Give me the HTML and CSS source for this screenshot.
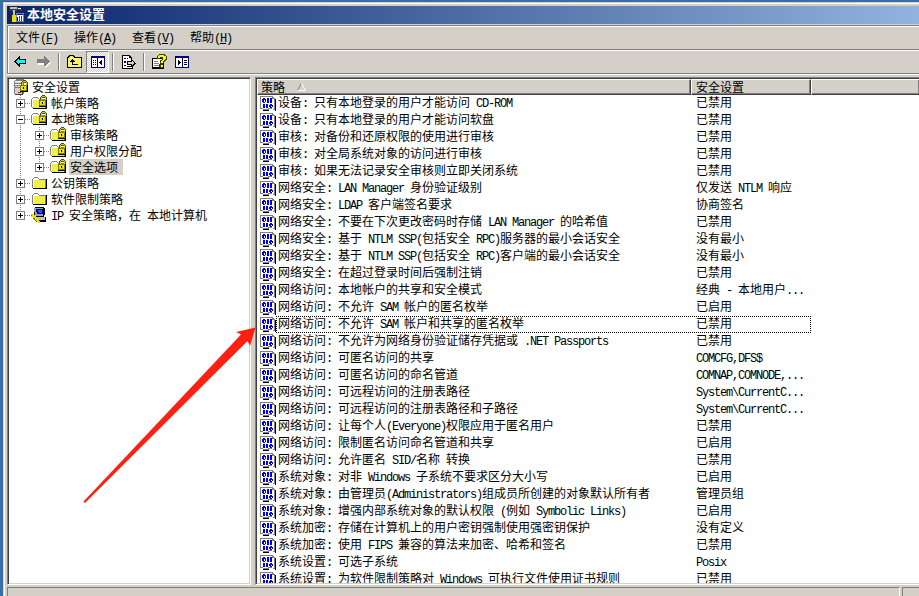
FILE: index.html
```
<!DOCTYPE html>
<html lang="zh-CN">
<head>
    <meta charset="UTF-8">
    <title>本地安全设置</title>
    <link rel="stylesheet" href="styles.css">
</head>
<body>
    <svg class="sprites" shape-rendering="crispEdges">
        <symbol id="lock" viewBox="0 0 8 12">
            <path d="M1 6V2h1V1h1V0h3v1h1v1h1v4H6V3H3v3z" fill="#505000"/>
            <path d="M2 5V2h1V1h3v1h1v3H6V2H3v3z" fill="#d8d020"/>
            <path d="M0 5h8v7H0z" fill="#000"/>
            <path d="M0 5h7v6H0z" fill="#808000"/>
            <path d="M1 6h5v4H1z" fill="#e8e020"/>
            <path d="M3 7h1v2H3z" fill="#000"/>
        </symbol>
        <symbol id="folder" viewBox="0 0 16 16">
            <path d="M2 14h14V4h-1v9H2z" fill="#000"/>
            <path d="M1 4h1V3h1V2h4v1h1v1h7v9H1z" fill="#808080"/>
            <path d="M2 4h1V3h4v1h1v1h6v8H2z" fill="#fff"/>
            <path d="M3 5h11v8H3z" fill="#f2ee48"/>
        </symbol>
        <symbol id="folder-lock" viewBox="0 0 16 16">
            <path d="M2 14h14V4h-1v9H1z" fill="#000"/>
            <path d="M0 4h1V3h1V2h5v1h1v1h7v9H1V12H0z" fill="#808080"/>
            <path d="M1 4h1V3h5v1h1v1h6v8H2v-1H1z" fill="#fff"/>
            <path d="M2 5h12v8H2z" fill="#f2ee48"/>
            <use href="#lock" x="8" y="0" width="8" height="12"/>
        </symbol>
        <symbol id="server" viewBox="0 0 16 16">
            <path d="M0 2l2-2h8v14l-2 2H2l-2-1z" fill="#808080"/>
            <path d="M1 2h7v13H1z" fill="#d4d0c8"/>
            <path d="M1 4h7v1H1zM1 6h7v1H1zM1 8h7v1H1z" fill="#808080"/>
            <path d="M1 2h7v1H1zM1 5h6v1H1z" fill="#fff"/>
            <path d="M4 13h3v1H4z" fill="#f00"/>
            <path d="M8 2h1v13H8zM1 15h8v1H1z" fill="#404040"/>
            <use href="#lock" x="6" y="1" width="8" height="12"/>
        </symbol>
        <symbol id="ipsec" viewBox="0 0 16 16">
            <path d="M3 1h1V0h9v1h1v7h-1v2h2v5H6v-1H4z" fill="#000"/>
            <path d="M3 1h9v8H4z" fill="#a0a0a0"/>
            <path d="M5 2h7v5H6z" fill="#000080"/>
            <path d="M7 3h4v3H8z" fill="#1060ff"/>
            <path d="M5 10h9v3H6z" fill="#c0c0c0"/>
            <path d="M0 7h3v1h2v2h1v1h1v1h1v2h1v2H7v-1H6v-1H5v-1H4v-2H2v-1H0V9h1V8H0z" fill="#e8e000"/>
            <path d="M0 8h1v1H0zM2 11h2v2h1v1h1v1H5v-1H4v-1H3v-1H2z" fill="#807000"/>
        </symbol>
        <symbol id="line" viewBox="0 0 19 16">
            <path d="M9.500 0V16" stroke="#808080" stroke-dasharray="1 1"/>
        </symbol>
        <symbol id="plus" viewBox="0 0 19 16">
            <path d="M9.500 0V16M14 8.500H19" stroke="#808080" stroke-dasharray="1 1"/>
            <rect x="5.500" y="4.500" width="8" height="8" fill="#fff" stroke="#808080"/>
            <path d="M7 8.500h5M9.500 6v5" stroke="#000"/>
        </symbol>
        <symbol id="plus-end" viewBox="0 0 19 16">
            <path d="M9.500 0V8M14 8.500H19" stroke="#808080" stroke-dasharray="1 1"/>
            <rect x="5.500" y="4.500" width="8" height="8" fill="#fff" stroke="#808080"/>
            <path d="M7 8.500h5M9.500 6v5" stroke="#000"/>
        </symbol>
        <symbol id="minus" viewBox="0 0 19 16">
            <path d="M9.500 0V16M14 8.500H19" stroke="#808080" stroke-dasharray="1 1"/>
            <rect x="5.500" y="4.500" width="8" height="8" fill="#fff" stroke="#808080"/>
            <path d="M7 8.500h5" stroke="#000"/>
        </symbol>
        <symbol id="policy" viewBox="0 0 16 16">
            <path d="M3 13h1v1h4v-1h5V3h3v12h-1v-1h-2v-1H9v2H3z" fill="#000"/>
            <path d="M0 0h13v1h1v1h1v12h-2v-1H9v1H3v-1H0z" fill="#808080"/>
            <path d="M1 1h11v2h2v10h-2v-1H8v1H3v-1H1z" fill="#fff"/>
            <path d="M3 2h2v1h1v3H5v1H3V6H2V3h1zM7 2h2v5H7zM10 2h2v5h-2zM3 8h2v4H3zM6 8h2v4H6zM10 8h2v1h1v2h-1v1h-2v-1H9V9h1z" fill="#0000e8"/>
            <path d="M3.500 3.500h1v2h-1zM10.500 9.500h1v1h-1z" fill="#fff"/>
        </symbol>
    </svg>

    <div class="window">
        <div class="title-bar">
            <svg width="16" height="16" shape-rendering="crispEdges">
                <path d="M1 0h8v1h3v1h1v2h-2V3H8v1H6v1H3V4H1z" fill="#404040"/>
                <path d="M1 0h7v2H1z" fill="#c0c0c0"/>
                <path d="M9 1h3v1H9z" fill="#fff"/>
                <path d="M3 8h4v7H3z" fill="#e8e000"/>
                <path d="M4 3h2v5H4z" fill="#c0c0c0"/>
                <path d="M7 6h8v9H7z" fill="#808080"/>
                <path d="M8 8h6v6H8z" fill="#fff"/>
                <path d="M8 7h6v1H8zM8 10h1v4H8z" fill="#0000ff"/>
                <path d="M10 9h1v5h-1zM12 9h1v5h-1z" fill="#d00060"/>
            </svg>
            <span>本地安全设置</span>
        </div>

        <div class="menu-bar">
            <span>文件<i>(<u>F</u>)</i></span>
            <span>操作<i>(<u>A</u>)</i></span>
            <span>查看<i>(<u>V</u>)</i></span>
            <span>帮助<i>(<u>H</u>)</i></span>
        </div>

        <div class="toolbar">
            <div class="tool">
                <svg width="13" height="11" shape-rendering="crispEdges">
                    <path d="M0 5h1V4h1V3h1V2h1V1h1V0h1v3h6v5H6v3H5v-1H4V9H3V8H2V7H1V6H0z" fill="#000"/>
                    <path d="M2 5h1V4h1V3h1v1h6v3H5v1H4V7H3V6H2z" fill="#00ffff"/>
                </svg>
            </div>
            <div class="tool">
                <svg width="14" height="11" shape-rendering="crispEdges">
                    <path d="M1 5h7V2h1v1h1v1h1v1h1v1h2v1h-1v1h-1v1h-1v1h-1v1H8V9H1z" fill="#fff"/>
                    <path d="M0 3h7V0h1v1h1v1h1v1h1v1h1v1h1v1h-1v1h-1v1h-1v1H9v1H7V7H0z" fill="#808080"/>
                </svg>
            </div>
            <div class="sep"></div>
            <div class="tool">
                <svg width="15" height="13" shape-rendering="crispEdges">
                    <path d="M0 2h1V1h1V0h5v1h1v1h7v11H0z" fill="#000"/>
                    <path d="M1 3h1V2h1V1h3v1h1v1h7v9H1z" fill="#f8f468"/>
                    <path d="M5 4h1v1h1v1h1v1H6v2h5v1H5V7H3V6h1V5h1z" fill="#000"/>
                </svg>
            </div>
            <div class="tool pressed">
                <svg width="14" height="12" shape-rendering="crispEdges">
                    <path d="M0 0h14v12H0z" fill="#000080"/>
                    <path d="M1 2h5v9H1zM7 2h6v9H7z" fill="#fff"/>
                    <path d="M2 4h1v1H2zM4 4h1v1H4zM2 6h1v1H2zM4 6h1v1H4zM2 8h1v1H2zM4 8h1v1H4zM10 4h1v5h-1zM9 5h1v3H9zM8 6h1v1H8z" fill="#000"/>
                </svg>
            </div>
            <div class="sep"></div>
            <div class="tool">
                <svg width="14" height="14" shape-rendering="crispEdges">
                    <path d="M0 0h8v1h1v1h1v2H9V3H7V1H1v12h9v-2h1v3H0z" fill="#000"/>
                    <path d="M1 1h6v3h3v9H1z" fill="#fff"/>
                    <path d="M2 3h2v1H2zM2 6h2v2H2zM2 10h2v1H2z" fill="#000080"/>
                    <path d="M5 3h1v1H5zM5 11h4v1H5z" fill="#000"/>
                    <path d="M5 6h4V4h1v1h1v1h1v1h1v1h1v1h-1v1h-1v1h-1v1h-2v-2H5z" fill="#000"/>
                    <path d="M6 7h4V6h1v1h1v2h-1v1h-1V9H6z" fill="#d4d0c8"/>
                </svg>
            </div>
            <div class="sep"></div>
            <div class="tool">
                <svg width="15" height="15" shape-rendering="crispEdges">
                    <path d="M0 4h12v11H0z" fill="#000"/>
                    <path d="M1 5h10v8H1z" fill="#fff"/>
                    <path d="M2 7h4v1H2zM2 9h5v1H2zM2 11h5v1H2z" fill="#808080"/>
                    <path d="M5 2h1V1h1V0h6v1h1v1h1v4h-1v1h-1v1h-1v1h-1v5H8v-1H7v-3h1V6h2V4H8v1H5z" fill="#404000"/>
                    <path d="M6 2h1V1h5v1h2v3h-1v1h-1v1h-1v2H9V7h1V6h1V3H8v1H6zM9 11h2v2H9z" fill="#ffff00"/>
                </svg>
            </div>
            <div class="tool last">
                <svg width="14" height="12" shape-rendering="crispEdges">
                    <path d="M0 0h14v12H0z" fill="#000080"/>
                    <path d="M1 2h6v9H1zM8 2h5v9H8z" fill="#fff"/>
                    <path d="M3 4h1v5H3zM4 5h1v3H4zM5 6h1v1H5zM9 4h3v1H9zM9 6h3v1H9zM9 8h3v1H9z" fill="#000"/>
                </svg>
            </div>
        </div>

        <div class="panes">
            <div class="tree">
                <div class="node root"><svg class="icon"><use href="#server"/></svg><span>安全设置</span></div>
                <div class="node"><svg class="branch"><use href="#plus"/></svg><svg class="icon"><use href="#folder-lock"/></svg><span>帐户策略</span></div>
                <div class="node"><svg class="branch"><use href="#minus"/></svg><svg class="icon"><use href="#folder-lock"/></svg><span>本地策略</span></div>
                <div class="node"><svg class="branch"><use href="#line"/></svg><svg class="branch"><use href="#plus"/></svg><svg class="icon"><use href="#folder-lock"/></svg><span>审核策略</span></div>
                <div class="node"><svg class="branch"><use href="#line"/></svg><svg class="branch"><use href="#plus"/></svg><svg class="icon"><use href="#folder-lock"/></svg><span>用户权限分配</span></div>
                <div class="node"><svg class="branch"><use href="#line"/></svg><svg class="branch"><use href="#plus-end"/></svg><svg class="icon"><use href="#folder-lock"/></svg><span class="selected">安全选项</span></div>
                <div class="node"><svg class="branch"><use href="#plus"/></svg><svg class="icon"><use href="#folder"/></svg><span>公钥策略</span></div>
                <div class="node"><svg class="branch"><use href="#plus"/></svg><svg class="icon"><use href="#folder"/></svg><span>软件限制策略</span></div>
                <div class="node"><svg class="branch"><use href="#plus-end"/></svg><svg class="icon"><use href="#ipsec"/></svg><span><i>IP </i>安全策略，在<i> </i>本地计算机</span></div>
            </div>

            <div class="list">
                <div class="list-header">
                    <div class="col col-name">策略
                        <svg width="9" height="8"><path d="M4.500 0L.5 7.500" stroke="#808080"/><path d="M4.500 0l4 7.500H.5" fill="none" stroke="#fff"/></svg>
                    </div>
                    <div class="col col-value">安全设置</div>
                    <div class="col col-rest"></div>
                </div>
                <div id="rows"></div>
            </div>
        </div>

        <div class="status-bar">
            <div class="status-main"></div>
            <div class="status-side"></div>
        </div>
    </div>

    <svg class="arrow" width="174" height="178">
        <path d="M172.500 1.500L153 6l5 2.500L.5 175.500l1.500 1.500L164.500 15l2.500 5z" fill="#ff2012"/>
    </svg>

    <script>
        const policies = [
            ['设备: 只有本地登录的用户才能访问 CD-ROM', '已禁用'],
            ['设备: 只有本地登录的用户才能访问软盘', '已禁用'],
            ['审核: 对备份和还原权限的使用进行审核', '已禁用'],
            ['审核: 对全局系统对象的访问进行审核', '已禁用'],
            ['审核: 如果无法记录安全审核则立即关闭系统', '已禁用'],
            ['网络安全: LAN Manager 身份验证级别', '仅发送 NTLM 响应'],
            ['网络安全: LDAP 客户端签名要求', '协商签名'],
            ['网络安全: 不要在下次更改密码时存储 LAN Manager 的哈希值', '已禁用'],
            ['网络安全: 基于 NTLM SSP(包括安全 RPC)服务器的最小会话安全', '没有最小'],
            ['网络安全: 基于 NTLM SSP(包括安全 RPC)客户端的最小会话安全', '没有最小'],
            ['网络安全: 在超过登录时间后强制注销', '已禁用'],
            ['网络访问: 本地帐户的共享和安全模式', '经典 - 本地用户...'],
            ['网络访问: 不允许 SAM 帐户的匿名枚举', '已启用'],
            ['网络访问: 不允许 SAM 帐户和共享的匿名枚举', '已禁用'],
            ['网络访问: 不允许为网络身份验证储存凭据或 .NET Passports', '已禁用'],
            ['网络访问: 可匿名访问的共享', 'COMCFG,DFS$'],
            ['网络访问: 可匿名访问的命名管道', 'COMNAP,COMNODE,...'],
            ['网络访问: 可远程访问的注册表路径', 'System\\CurrentC...'],
            ['网络访问: 可远程访问的注册表路径和子路径', 'System\\CurrentC...'],
            ['网络访问: 让每个人(Everyone)权限应用于匿名用户', '已禁用'],
            ['网络访问: 限制匿名访问命名管道和共享', '已启用'],
            ['网络访问: 允许匿名 SID/名称 转换', '已禁用'],
            ['系统对象: 对非 Windows 子系统不要求区分大小写', '已启用'],
            ['系统对象: 由管理员(Administrators)组成员所创建的对象默认所有者', '管理员组'],
            ['系统对象: 增强内部系统对象的默认权限 (例如 Symbolic Links)', '已启用'],
            ['系统加密: 存储在计算机上的用户密钥强制使用强密钥保护', '没有定义'],
            ['系统加密: 使用 FIPS 兼容的算法来加密、哈希和签名', '已禁用'],
            ['系统设置: 可选子系统', 'Posix'],
            ['系统设置: 为软件限制策略对 Windows 可执行文件使用证书规则', '已禁用']
        ];
        const focused = 13;

        // half-width characters take exactly half a CJK cell
        function halfWidth(text) {
            return text.replace(/[\x20-\x7e]+/g, '<i>$&</i>');
        }

        document.getElementById('rows').innerHTML = policies.map((policy, index) => `
            <div class="row">
                <svg class="icon"><use href="#policy"/></svg>
                <div class="cells${index === focused ? ' focused' : ''}">
                    <span class="name">${halfWidth(policy[0])}</span>
                    <span>${halfWidth(policy[1])}</span>
                </div>
            </div>
        `).join('');
    </script>
</body>
</html>
```
FILE: styles.css
```
* {
    box-sizing: border-box;
}
body {
    margin: 0;
    width: 919px;
    height: 596px;
    overflow: hidden;
    padding: 2px 0 0 3px;
    background: #3a6ea5;
    font: 12px/16px "Noto Sans CJK SC", sans-serif;
    color: #000;
    position: relative;
}
svg {
    display: block;
    flex: none;
}
i {
    font: 12px/1 "Liberation Mono", monospace;
    letter-spacing: -1.2px;
    white-space: pre;
}
.sprites {
    position: absolute;
    width: 0;
    height: 0;
}
.icon {
    width: 16px;
    height: 16px;
    shape-rendering: crispEdges;
}
.window {
    display: flex;
    flex-direction: column;
    height: 594px;
    background: #d4d0c8;
    border-left: 1px solid #d4d0c8;
    border-top: 1px solid #d4d0c8;
    box-shadow: inset 1px 1px 0 #fff;
    padding: 3px 0 0 3px;
}
.title-bar {
    display: flex;
    align-items: center;
    gap: 2px;
    height: 18px;
    padding-left: 2px;
    background: linear-gradient(to right, #0a246a, #90b4de);
    color: #fff;
    font-weight: bold;
    font-size: 13px;
}
.title-bar span {
    margin-top: -2px;
}
.menu-bar,
.toolbar {
    display: flex;
    align-items: center;
    flex: none;
    border: solid #808080;
    border-width: 1px 0 0 1px;
    box-shadow: inset 1px 1px 0 #fff;
}
.menu-bar {
    gap: 16px;
    height: 24px;
    margin-top: 1px;
    padding-left: 8px;
}
.menu-bar span {
    width: 42px;
    margin-top: -2px;
    white-space: nowrap;
}
.menu-bar u {
    text-underline-offset: 1px;
}
.toolbar {
    height: 24px;
    padding-left: 1px;
}
.tool {
    display: flex;
    align-items: center;
    justify-content: center;
    width: 23px;
    height: 22px;
}
.tool.last {
    padding-right: 2px;
}
.pressed {
    background: repeating-conic-gradient(#fff 0 25%, #d4d0c8 0 50%) 0 0 / 2px 2px;
    border: 1px solid;
    border-color: #808080 #fff #fff #808080;
}
.sep {
    width: 2px;
    height: 18px;
    margin: 0 3px;
    border-left: 1px solid #808080;
    border-right: 1px solid #fff;
}
.panes {
    display: flex;
    gap: 4px;
    height: 512px;
    border-top: 1px solid #808080;
    box-shadow: inset 0 1px 0 #fff;
    padding-top: 3px;
}
.tree,
.list {
    height: 508px;
    overflow: hidden;
    background: #fff;
    border: 1px solid;
    border-color: #808080 #fff #fff #808080;
    box-shadow: inset 1px 1px 0 #404040, inset -1px -1px 0 #d4d0c8;
}
.tree {
    width: 244px;
    padding: 1px 0 0 3px;
}
.node {
    display: flex;
    height: 16px;
    white-space: nowrap;
}
.node.root {
    padding-left: 3px;
}
.branch {
    width: 19px;
    height: 16px;
}
.node .branch + .icon {
    margin-left: 1px;
}
.node span {
    padding: 0 4px;
    line-height: 15px;
}
.node.root span {
    padding-left: 2px;
}
.node .selected {
    margin-left: 3px;
    padding: 0 5px 0 1px;
    background: #d4d0c8;
}
.list {
    flex: 1;
    border-right: 0;
    padding: 1px 0 1px 1px;
    box-shadow: inset 1px 1px 0 #404040, inset 0 -1px 0 #d4d0c8;
}
.list-header {
    display: flex;
    height: 16px;
}
.col {
    display: flex;
    align-items: center;
    gap: 12px;
    line-height: 14px;
    background: #d4d0c8;
    border: 1px solid;
    border-color: #fff #404040 #404040 #fff;
    box-shadow: inset -1px -1px 0 #808080;
}
.col-name {
    width: 434px;
    padding-left: 3px;
}
.col-value {
    width: 120px;
    padding-left: 4px;
}
.col-rest {
    flex: 1;
    border-right: 0;
}
#rows {
    height: 488px;
    overflow: hidden;
}
.row {
    display: flex;
    height: 17px;
    padding: 0 0 0 3px;
    align-items: flex-end;
}
.cells {
    display: flex;
    width: 535px;
    height: 17px;
    border: 1px dotted transparent;
    line-height: 12px;
    white-space: nowrap;
}
.cells.focused {
    border-color: #000;
}
.name {
    width: 418px;
    margin-left: 1px;
}
.status-bar {
    display: flex;
    gap: 2px;
    height: 11px;
    flex: none;
    padding-top: 2px;
}
.status-main,
.status-side {
    border: solid #808080;
    border-width: 1px 0 0 1px;
}
.status-main {
    flex: 1;
    border-right: 1px solid #fff;
}
.status-side {
    width: 17px;
}
.arrow {
    position: absolute;
    left: 83px;
    top: 326px;
}
```
